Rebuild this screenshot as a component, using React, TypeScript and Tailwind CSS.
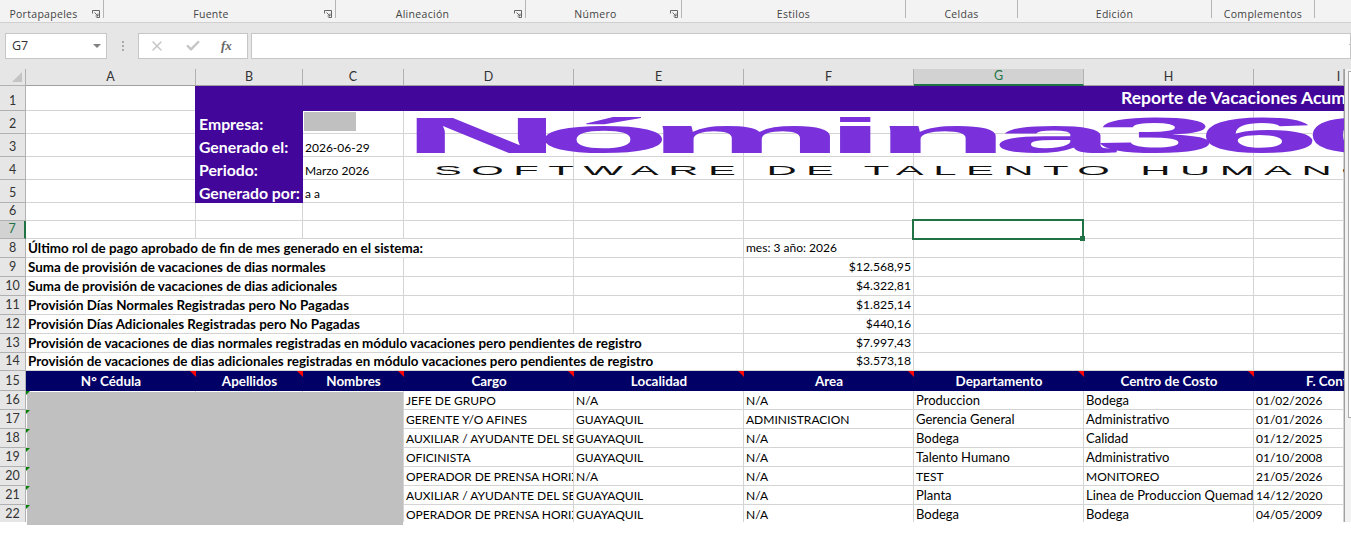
import React from 'react';
import { ChevronDown, Check, X } from 'lucide-react';

const columns = ['A', 'B', 'C', 'D', 'E', 'F', 'G', 'H', 'I'];

const ribbonGroups = [
  { label: 'Portapapeles', width: 'w-[104px]', launcher: true, pad: 'pr-[16px]' },
  { label: 'Fuente', width: 'w-[232px]', launcher: true, pad: 'pr-[17px]' },
  { label: 'Alineación', width: 'w-[190px]', launcher: true, pad: 'pr-[16px]' },
  { label: 'Número', width: 'w-[156px]', launcher: true, pad: 'pr-[16px]' },
  { label: 'Estilos', width: 'w-[224px]', launcher: false, pad: '' },
  { label: 'Celdas', width: 'w-[112px]', launcher: false, pad: '' },
  { label: 'Edición', width: 'w-[194px]', launcher: false, pad: '' },
  { label: 'Complementos', width: 'w-[103px]', launcher: false, pad: '' },
];

const summary = [
  { row: 8, label: 'Último rol de pago aprobado de fin de mes generado en el sistema:', span: 'col-span-4', fill: 1, value: 'mes: 3 año: 2026', left: true },
  { row: 9, label: 'Suma de provisión de vacaciones de dias normales', span: 'col-span-3', fill: 2, value: '$12.568,95' },
  { row: 10, label: 'Suma de provisión de vacaciones de dias adicionales', span: 'col-span-3', fill: 2, value: '$4.322,81' },
  { row: 11, label: 'Provisión Días Normales Registradas pero No Pagadas', span: 'col-span-3', fill: 2, value: '$1.825,14' },
  { row: 12, label: 'Provisión Días Adicionales Registradas pero No Pagadas', span: 'col-span-3', fill: 2, value: '$440,16' },
  { row: 13, label: 'Provisión de vacaciones de dias normales registradas en módulo vacaciones pero pendientes de registro', span: 'col-span-5', fill: 0, value: '$7.997,43' },
  { row: 14, label: 'Provisión de vacaciones de dias adicionales registradas en módulo vacaciones pero pendientes de registro', span: 'col-span-5', fill: 0, value: '$3.573,18' },
];

const headers = ['N° Cédula', 'Apellidos', 'Nombres', 'Cargo', 'Localidad', 'Area', 'Departamento', 'Centro de Costo', 'F. Contrato'];

const employees = [
  ['JEFE DE GRUPO', 'N/A', 'N/A', 'Produccion', 'Bodega', '01/02/2026'],
  ['GERENTE Y/O AFINES', 'GUAYAQUIL', 'ADMINISTRACION', 'Gerencia General', 'Administrativo', '01/01/2026'],
  ['AUXILIAR / AYUDANTE DEL SERVICIO', 'GUAYAQUIL', 'N/A', 'Bodega', 'Calidad', '01/12/2025'],
  ['OFICINISTA', 'GUAYAQUIL', 'N/A', 'Talento Humano', 'Administrativo', '01/10/2008'],
  ['OPERADOR DE PRENSA HORIZONTAL', 'N/A', 'N/A', 'TEST', 'MONITOREO', '21/05/2026'],
  ['AUXILIAR / AYUDANTE DEL SERVICIO', 'GUAYAQUIL', 'N/A', 'Planta', 'Linea de Produccion Quemado', '14/12/2020'],
  ['OPERADOR DE PRENSA HORIZONTAL', 'GUAYAQUIL', 'N/A', 'Bodega', 'Bodega', '04/05/2009'],
];

const greenMarks = ['top-[322px]', 'top-[341px]', 'top-[360px]', 'top-[379px]', 'top-[398px]', 'top-[417px]', 'top-[436px]'];

const cell = 'border-r border-b border-[#d4d4d4] overflow-hidden whitespace-nowrap';

const RowNum = ({ n, active }: { n: number; active?: boolean }) => (
  <div
    className={`flex items-end justify-center text-[12.5px] leading-[18px] border-b border-r border-[#b1b1b1] ${
      active ? 'bg-[#d2d2d2] text-[#217346] border-r-2 border-r-[#217346]' : 'bg-[#e6e6e6] text-[#333]'
    }`}
  >
    {n}
  </div>
);

const Launcher = () => (
  <svg width="8" height="8" viewBox="0 0 8 8" className="block" fill="none" stroke="#666">
    <path d="M0.5 3.5V0.5H7.5V7.5H4.5" />
    <path d="M2.5 2.5L6 6M6 3.5V6H3.5" />
  </svg>
);

// logo sits over cells D2:I4, letters placed one by one because the picture is stretched
const Logo = () => (
  <svg className="absolute left-[402px] top-[42px] pointer-events-none" width="942" height="70" viewBox="0 0 942 70">
    <g transform="scale(4.4 1)">
      <text
        x="0 30.5 55.9 96.1 107.5 134.3 157.5 180.9 205"
        y="42"
        fill="#7a30db"
        fontFamily="Liberation Sans"
        fontWeight="700"
        fontSize="50"
      >
        Nómina360
      </text>
    </g>
    <g transform="scale(3.1 1)">
      <text x="10.3" y="64" fill="#111" fontFamily="Liberation Sans" fontSize="13.5" letterSpacing="3.06">
        SOFTWARE DE TALENTO HUMANO
      </text>
    </g>
  </svg>
);

export default function App() {
  return (
    <div className="w-[1351px] h-[540px] overflow-hidden bg-white font-['Lato',sans-serif] text-[13px] text-black">
      <div className="relative flex h-[23px] bg-[#f3f3f3] border-b border-[#d0d0d0] font-['Open_Sans',sans-serif] text-[10.5px] tracking-[0.3px] text-[#444]">
        {ribbonGroups.map((g) => (
          <div key={g.label} className={`${g.width} h-[18px] flex items-end justify-center border-r border-[#b5b5b5]`}>
            <div className={`relative flex-1 text-center leading-[14px] -mb-[3px] ${g.pad}`}>
              {g.label}
              {g.launcher && (
                <span className="absolute right-[3px] top-[3px]">
                  <Launcher />
                </span>
              )}
            </div>
          </div>
        ))}
      </div>

      <div className="flex items-start h-[46px] bg-[#e6e6e6] pt-[10px] pl-[5px]">
        <div className="flex items-center justify-between w-[102px] h-[26px] bg-white border border-[#c6c6c6] pl-[6px] pr-[5px] font-['Open_Sans',sans-serif] text-[12.5px] text-[#333]">
          G7
          <span className="border-x-[4px] border-x-transparent border-t-[4px] border-t-[#808080]" />
        </div>
        <div className="w-[31px] h-[26px] flex flex-col items-center justify-center gap-[2px]">
          <span className="w-[2px] h-[2px] bg-[#aaa]" />
          <span className="w-[2px] h-[2px] bg-[#aaa]" />
          <span className="w-[2px] h-[2px] bg-[#aaa]" />
        </div>
        <div className="flex items-center w-[110px] h-[26px] bg-white border border-[#c6c6c6]">
          <X className="w-4 h-4 ml-[10px] text-[#c4c4c4]" strokeWidth={2} />
          <Check className="w-4 h-4 ml-[20px] text-[#c4c4c4]" strokeWidth={3.5} />
          <span className="ml-[20px] font-['Liberation_Serif',serif] italic font-bold text-[13px] text-[#666]">fx</span>
        </div>
        <div className="flex-1 flex items-center justify-end h-[26px] ml-[3px] bg-white border border-[#c6c6c6] overflow-hidden">
          <ChevronDown className="w-3 h-3 -mr-[9px] text-[#555]" />
        </div>
      </div>

      <div className="relative h-[453px]">
        <div className="absolute right-0 top-0 bottom-0 w-[7px] bg-[#f1f1f1] border-l border-[#a0a0a0]">
          <div className="absolute left-[3px] top-[2px] w-[6px] h-[347px] bg-white border border-[#ababab]" />
        </div>
        <div className="relative w-[1344px] h-[453px] overflow-hidden grid grid-cols-[26px_170px_107px_101px_170px_170px_170px_170px_170px_90px] grid-rows-[17px_25px_23px_23px_23px_23px_18px_18px_19px_19px_19px_19px_19px_19px_18px_20px_repeat(7,19px)] content-start">
          <div className="relative bg-[#e6e6e6] border-r border-b border-[#b1b1b1]">
            <span className="absolute right-[3px] bottom-[3px] border-l-[10px] border-l-transparent border-b-[10px] border-b-[#c4c4c4]" />
          </div>
          {columns.map((c) => (
            <div
              key={c}
              className={`flex items-center justify-center text-[12.5px] border-r border-[#b1b1b1] ${
                c === 'G' ? 'bg-[#d2d2d2] text-[#217346] border-b-2 border-b-[#217346]' : 'bg-[#e6e6e6] text-[#333] border-b border-b-[#9f9f9f]'
              } ${c === 'I' ? 'pl-[80px]' : ''}`}
            >
              {c}
            </div>
          ))}

          <RowNum n={1} />
          <div className="border-b border-[#d4d4d4]" />
          <div className="col-span-8 -ml-px bg-[#42069a] overflow-hidden whitespace-nowrap pl-[926px] flex items-center font-bold text-[17.5px] text-white">
            Reporte de Vacaciones Acumuladas
          </div>

          {[
            { row: 2, label: 'Empresa:', value: '' },
            { row: 3, label: 'Generado el:', value: '2026-06-29' },
            { row: 4, label: 'Periodo:', value: 'Marzo 2026' },
            { row: 5, label: 'Generado por:', value: 'a a' },
          ].map((r) => (
            <React.Fragment key={r.row}>
              <RowNum n={r.row} />
              <div className="border-b border-[#d4d4d4]" />
              <div className="-ml-px bg-[#42069a] flex items-center pl-[4px] pt-[2px] font-bold text-[15.8px] text-white whitespace-nowrap">{r.label}</div>
              <div className={`${cell} flex items-end pl-[2px] text-[12px]`}>
                {r.row === 2 ? <span className="w-[52px] h-[19px] -ml-px mb-[2px] bg-[#c0c0c0]" /> : <span className="leading-[16px]">{r.value}</span>}
              </div>
              {[0, 1, 2, 3, 4, 5].map((i) => (
                <div key={i} className={cell} />
              ))}
            </React.Fragment>
          ))}

          {[6, 7].map((n) => (
            <React.Fragment key={n}>
              <RowNum n={n} active={n === 7} />
              {columns.map((c) => (
                <div key={c} className={cell} />
              ))}
            </React.Fragment>
          ))}

          {summary.map((s) => (
            <React.Fragment key={s.row}>
              <RowNum n={s.row} />
              <div className={`${cell} ${s.span} flex items-center pl-[2px] font-bold text-[13.4px]`}>{s.label}</div>
              {Array.from({ length: s.fill }).map((_, i) => (
                <div key={i} className={cell} />
              ))}
              <div className={`${cell} flex items-center px-[2px] ${s.left ? 'justify-start text-[12px]' : 'justify-end text-[12.2px]'}`}>{s.value}</div>
              {[0, 1, 2].map((i) => (
                <div key={i} className={cell} />
              ))}
            </React.Fragment>
          ))}

          <RowNum n={15} />
          {headers.map((h, i) => (
            <div
              key={h}
              className={`relative bg-[#000066] overflow-hidden whitespace-nowrap flex items-center font-bold text-[13.4px] text-white ${
                i === 8 ? 'pl-[52px]' : 'justify-center'
              }`}
            >
              {h}
              {i < 8 && <span className="absolute right-0 top-0 border-l-[6px] border-l-transparent border-t-[6px] border-t-[#ff0000]" />}
            </div>
          ))}

          {employees.map((row, idx) => (
            <React.Fragment key={idx}>
              <RowNum n={16 + idx} />
              {[0, 1, 2].map((i) => (
                <div key={i} className={cell} />
              ))}
              {row.map((v, i) => (
                <div key={i} className={`${cell} flex items-center pl-[2px] pt-px ${/[a-z]/.test(v) ? 'text-[13px]' : 'text-[12px]'}`}>
                  {v}
                </div>
              ))}
            </React.Fragment>
          ))}

          <Logo />

          {/* selected cell G7 */}
          <div className="absolute left-[912px] top-[150px] w-[172px] h-[21px] border-2 border-[#217346]">
            <span className="absolute -right-[3px] -bottom-[3px] w-[5px] h-[5px] bg-[#217346]" />
          </div>
        </div>

        {/* censored names, runs past the last visible row */}
        <div className="absolute left-[27px] top-[323px] w-[376px] h-[133px] bg-[#c0c0c0]" />
        {greenMarks.map((top) => (
          <span key={top} className={`absolute left-[26px] ${top} border-r-[4px] border-r-transparent border-t-[4px] border-t-[#008000]`} />
        ))}
      </div>
    </div>
  );
}
